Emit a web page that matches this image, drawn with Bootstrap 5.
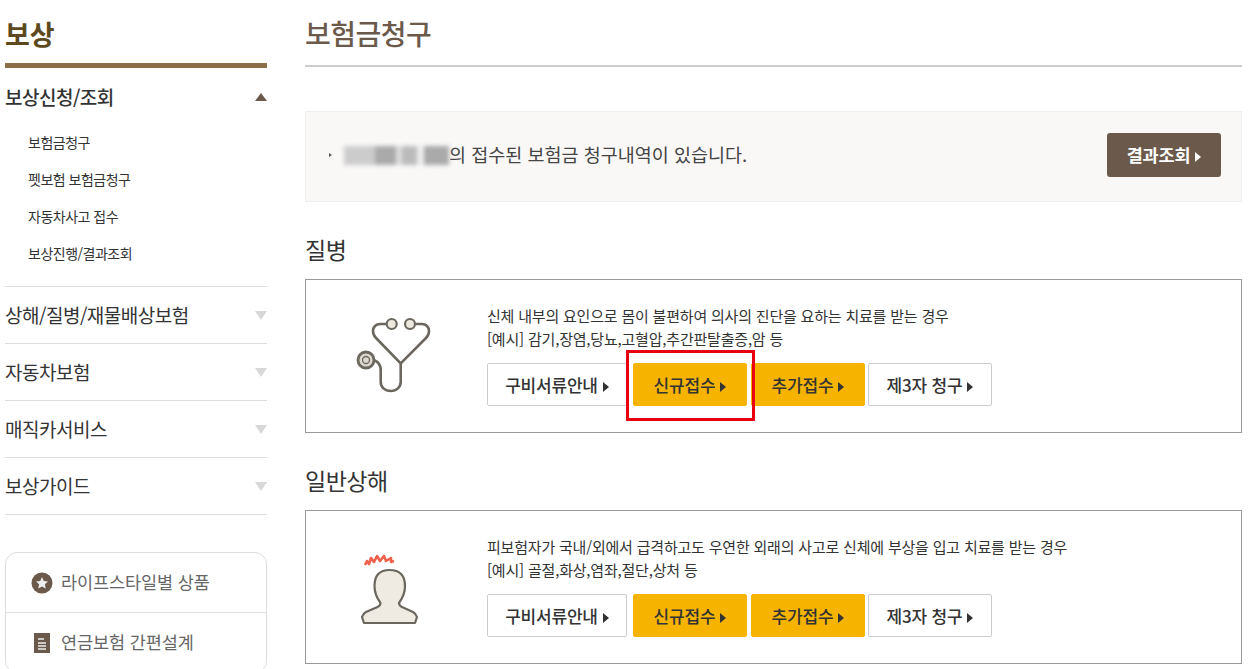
<!DOCTYPE html>
<html lang="ko">
<head>
    <meta charset="UTF-8">
    <meta name="viewport" content="width=device-width, initial-scale=1.0">
    <title>보험금청구</title>
    <link href="https://cdn.jsdelivr.net/npm/bootstrap@5.3.0/dist/css/bootstrap.min.css" rel="stylesheet">
    <style>
        html, body { height: 669px; overflow: hidden; }
        body { font-family: "Noto Sans CJK KR", "Noto Sans", sans-serif; color: #333; background: #fff; }
        .page-wrap { position: relative; padding-left: 5px; padding-right: 9px; gap: 38px; }
        .side-col { width: 262px; flex: none; }
        .main-col { flex: 1; min-width: 0; }
        .side-title { font-size: 27px; font-weight: 700; color: #5c4a1e; height: 63px; line-height: 67px; margin: 0; }
        .side-bar-line { height: 5px; background: #8b6f47; }
        .side-head { height: 57px; color: #333; font-size: 19px; letter-spacing: -.5px; border-bottom: 1px solid #ddd; }
        .side-head.is-open { border-bottom: 0; height: 58px; font-weight: 500; }
        .tri-up { width: 0; height: 0; border: 6.5px solid transparent; border-top: 0; border-bottom: 8px solid #6b5a4b; }
        .tri-down { width: 0; height: 0; border: 6px solid transparent; border-bottom: 0; border-top: 9px solid #d8d8d8; }
        .sub-menu { margin-top: -2px; padding: 0 0 14px 23px; border-bottom: 1px solid #ddd; }
        .sub-menu a { display: block; height: 37px; line-height: 37px; font-size: 14px; letter-spacing: -.5px; color: #333; text-decoration: none; }
        .quick-box { margin-top: 37px; border: 1px solid #ddd; border-radius: 12px; }
        .quick-row { height: 59px; padding-left: 25px; gap: 8px; font-size: 17.5px; letter-spacing: -.1px; color: #666; }
        .quick-row + .quick-row { border-top: 1px solid #ddd; height: 60px; }
        .main-title { font-size: 28px; font-weight: 500; color: #6b5a4b; height: 67px; line-height: 66px; margin: 0; border-bottom: 2px solid #ccc; letter-spacing: -.5px; }
        .notice-box { margin-top: 44px; height: 91px; background: #faf8f7; border: 1px solid #eee; padding: 0 20px 3px 23px; font-size: 18.5px; color: #444; }
        .notice-dot { width: 0; height: 0; border: 2px solid transparent; border-left: 3px solid #555; margin-right: 10px; }
        .blur-name { width: 105px; height: 19px; filter: blur(2px); background: linear-gradient(90deg, #ccc 0 30%, #aaa 30% 50%, #ddd 50% 55%, #bbb 55% 70%, #eee 70% 76%, #aaa 76% 100%); }
        .btn-result { width: 114px; height: 44px; background: #6b5a4b; color: #fff; font-size: 17.5px; font-weight: 700; border-radius: 3px; border: 0; padding: 0; letter-spacing: -.2px; }
        .btn-result:hover { background: #6b5a4b; color: #fff; }
        .section-title { font-size: 23px; color: #333; margin: 0; height: 77px; padding-top: 31px; line-height: 32px; letter-spacing: -.5px; font-weight: 400; }
        .claim-box { border: 1px solid #999; height: 154px; }
        .claim-icon { width: 181px; flex: none; padding: 20px 0 0 24px; }
        .claim-text { font-size: 15px; line-height: 23px; letter-spacing: -.2px; color: #333; margin: 0 0 13px; }
        .claim-body { padding-top: 24px; }
        .act-btn { height: 43px; font-size: 17px; font-weight: 500; padding: 0; border-radius: 2px; letter-spacing: -.2px; color: #333; white-space: nowrap; }
        .act-white { background: #fff; border: 1px solid #ccc; }
        .act-yellow { background: #f6b400; border: 1px solid #f6b400; }
        .act-yellow:hover { background: #f6b400; border-color: #f6b400; }
        .act-w1 { width: 140px; margin-right: 6px; }
        .act-w2 { width: 114px; margin-right: 4px; }
        .act-w3 { width: 114px; margin-right: 3px; }
        .act-w4 { width: 124px; }
        .tri-right { display: inline-block; width: 0; height: 0; border: 5.5px solid transparent; border-right: 0; border-left: 6.5px solid currentColor; margin-left: 5px; }
        .red-mark { position: absolute; left: 626px; top: 350px; width: 129px; height: 71px; border: 3px solid #e60012; pointer-events: none; }
    </style>
</head>
<body>
    <div class="page-wrap d-flex">
        <aside class="side-col">
            <h2 class="side-title">보상</h2>
            <div class="side-bar-line"></div>
            <div class="side-head is-open d-flex align-items-center justify-content-between"><span>보상신청/조회</span><span class="tri-up"></span></div>
            <div class="sub-menu">
                <a href="#">보험금청구</a>
                <a href="#">펫보험 보험금청구</a>
                <a href="#">자동차사고 접수</a>
                <a href="#">보상진행/결과조회</a>
            </div>
            <div class="side-head d-flex align-items-center justify-content-between"><span>상해/질병/재물배상보험</span><span class="tri-down"></span></div>
            <div class="side-head d-flex align-items-center justify-content-between"><span>자동차보험</span><span class="tri-down"></span></div>
            <div class="side-head d-flex align-items-center justify-content-between"><span>매직카서비스</span><span class="tri-down"></span></div>
            <div class="side-head d-flex align-items-center justify-content-between"><span>보상가이드</span><span class="tri-down"></span></div>
            <div class="quick-box">
                <div class="quick-row d-flex align-items-center">
                    <svg width="22" height="22" viewBox="0 0 22 22"><circle cx="11" cy="11" r="10.5" fill="#6b5a4b"/><path d="M11 5l1.8 3.9 4.2.5-3.1 2.9.8 4.2-3.7-2.1-3.7 2.1.8-4.2L5 9.4l4.2-.5z" fill="#eee"/></svg>
                    <span>라이프스타일별 상품</span>
                </div>
                <div class="quick-row d-flex align-items-center">
                    <svg width="22" height="22" viewBox="0 0 22 22"><path d="M3 1h16v20H3z" fill="#6b5a4b"/><path d="M7 7h6M7 11h8M7 14h8M7 17h8" stroke="#eee" stroke-width="1.3"/></svg>
                    <span>연금보험 간편설계</span>
                </div>
            </div>
        </aside>
        <main class="main-col">
            <h1 class="main-title">보험금청구</h1>
            <div class="notice-box d-flex align-items-center">
                <span class="notice-dot"></span>
                <span class="blur-name"></span>
                <span class="flex-grow-1">의 접수된 보험금 청구내역이 있습니다.</span>
                <button class="btn btn-result">결과조회<span class="tri-right"></span></button>
            </div>

            <h3 class="section-title">질병</h3>
            <div class="claim-box d-flex">
                <div class="claim-icon">
                    <svg class="d-block" width="130" height="110" viewBox="0 0 130 110" fill="none">
                        <path d="M56 24H50c-4 0-7 3-7 7 0 3 1 5 3 7L70.7 63.3 96 38c2-2 3-4 3-7 0-4-3-7-7-7h-6" stroke="#6b675f" stroke-width="2.6"/>
                        <path d="M70.7 63.3V82c0 5-4 9-10 9s-10-4-10-9V70c0-6-4-10-9-10" stroke="#6b675f" stroke-width="2.6"/>
                        <circle cx="61.7" cy="24" r="5" fill="#eee9df" stroke="#6b675f" stroke-width="2.2"/>
                        <circle cx="80" cy="24" r="5" fill="#eee9df" stroke="#6b675f" stroke-width="2.2"/>
                        <circle cx="36" cy="60" r="8" fill="#ddd8cd" stroke="#6b675f" stroke-width="2.8"/>
                        <circle cx="36" cy="60" r="3.5" fill="none" stroke="#6b675f" stroke-width="1.3"/>
                    </svg>
                </div>
                <div class="claim-body">
                    <p class="claim-text">신체 내부의 요인으로 몸이 불편하여 의사의 진단을 요하는 치료를 받는 경우<br>[예시] 감기,장염,당뇨,고혈압,추간판탈출증,암 등</p>
                    <div class="d-flex">
                        <button class="btn act-btn act-white act-w1">구비서류안내<span class="tri-right"></span></button>
                        <button class="btn act-btn act-yellow act-w2">신규접수<span class="tri-right"></span></button>
                        <button class="btn act-btn act-yellow act-w3">추가접수<span class="tri-right"></span></button>
                        <button class="btn act-btn act-white act-w4">제3자 청구<span class="tri-right"></span></button>
                    </div>
                </div>
            </div>

            <h3 class="section-title">일반상해</h3>
            <div class="claim-box d-flex">
                <div class="claim-icon">
                    <svg class="d-block" width="130" height="110" viewBox="0 -9 130 110" fill="none">
                        <path d="M35 25l2-4 2 3 2-6 3 4 3-6 3 5 4-5 2 5 5-3 0 4 3-1" stroke="#f0604a" stroke-width="2.6" stroke-linejoin="round"/>
                        <path d="M59.5 30c-10 0-15 6-15 16 0 7 3 13 6 17 0 2-1 3-3 4L36 72c-2 1-3 2-4 5l2 6H85l2-6c-1-3-2-4-4-5L72 67c-2-1-3-2-3-4 3-4 6-10 6-17 0-10-5-16-15.500-16z" fill="#efebe2" stroke="#6b675f" stroke-width="2.2" stroke-linejoin="round"/>
                    </svg>
                </div>
                <div class="claim-body">
                    <p class="claim-text">피보험자가 국내/외에서 급격하고도 우연한 외래의 사고로 신체에 부상을 입고 치료를 받는 경우<br>[예시] 골절,화상,염좌,절단,상처 등</p>
                    <div class="d-flex">
                        <button class="btn act-btn act-white act-w1">구비서류안내<span class="tri-right"></span></button>
                        <button class="btn act-btn act-yellow act-w2">신규접수<span class="tri-right"></span></button>
                        <button class="btn act-btn act-yellow act-w3">추가접수<span class="tri-right"></span></button>
                        <button class="btn act-btn act-white act-w4">제3자 청구<span class="tri-right"></span></button>
                    </div>
                </div>
            </div>
        </main>
        <div class="red-mark"></div>
    </div>
</body>
</html>
